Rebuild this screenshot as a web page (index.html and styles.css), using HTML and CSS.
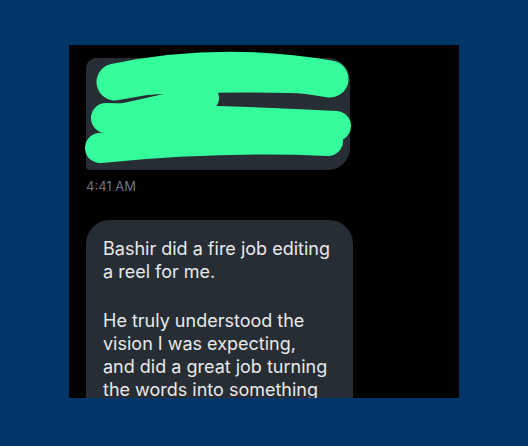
FILE: index.html
```html
<!DOCTYPE html>
<html lang="en">
<head>
  <meta charset="UTF-8">
  <title>Messages</title>
  <link rel="stylesheet" href="styles.css">
</head>
<body>
  <main class="panel">
    <div class="msg-group">
      <div class="bubble bubble-redacted">
        <svg class="scribble" viewBox="80 48 280 125" width="280" height="125">
          <path class="thick" d="M115,82 Q220,60 330,79" />
          <path class="flat" d="M122,86 Q220,80 325,84" />
          <path class="thin" d="M125,116 L206,98" />
          <path d="M106,118 Q220,120 336,126" />
          <path d="M100,148 Q220,136 328,141" />
        </svg>
      </div>
      <div class="time">4:41 AM</div>
    </div>

    <div class="bubble bubble-text">
      <p>Bashir did a fire job editing a reel for me.</p>
      <p>He truly understood the vision I was expecting,<br>and did a great job turning the words into something that I was proud of.</p>
    </div>
  </main>
</body>
</html>
```

FILE: styles.css
```css
body {
  margin: 0;
  background-color: #033668;
  font-family: 'Inter', 'Liberation Sans', sans-serif;
  padding-top: 45px;
}
.panel {
  width: 373px;
  height: 340px;
  margin: 0 auto;
  background: #000;
  padding: 13px 0 0 17px;
  overflow: hidden;
}
.msg-group {
  margin-bottom: 26px;
}
.bubble {
  background: #272d34;
  border-radius: 22px;
}
.bubble-redacted {
  position: relative;
  width: 264px;
  height: 112px;
  border-radius: 10px 22px 22px 4px;
}
.scribble {
  position: absolute;
  left: -6px;
  top: -10px;
  overflow: visible;
}
.scribble path {
  fill: none;
  stroke: #35fd9b;
  stroke-width: 30;
  stroke-linecap: round;
  stroke-linejoin: round;
}
.scribble .thick {
  stroke-width: 37;
}
.scribble .flat {
  stroke-width: 20;
}
.scribble .thin {
  stroke-width: 26;
}
.time {
  color: #71767b;
  font-size: 13px;
  margin-top: 8px;
  line-height: 16px;
}
.bubble-text {
  width: 234px;
  padding: 17px 16px 20px 17px;
  color: #e7e9ea;
  font-size: 18px;
  line-height: 23px;
  border-radius: 24px 24px 24px 4px;
}
.bubble-text p {
  margin: 0 0 26px 0;
}
```
